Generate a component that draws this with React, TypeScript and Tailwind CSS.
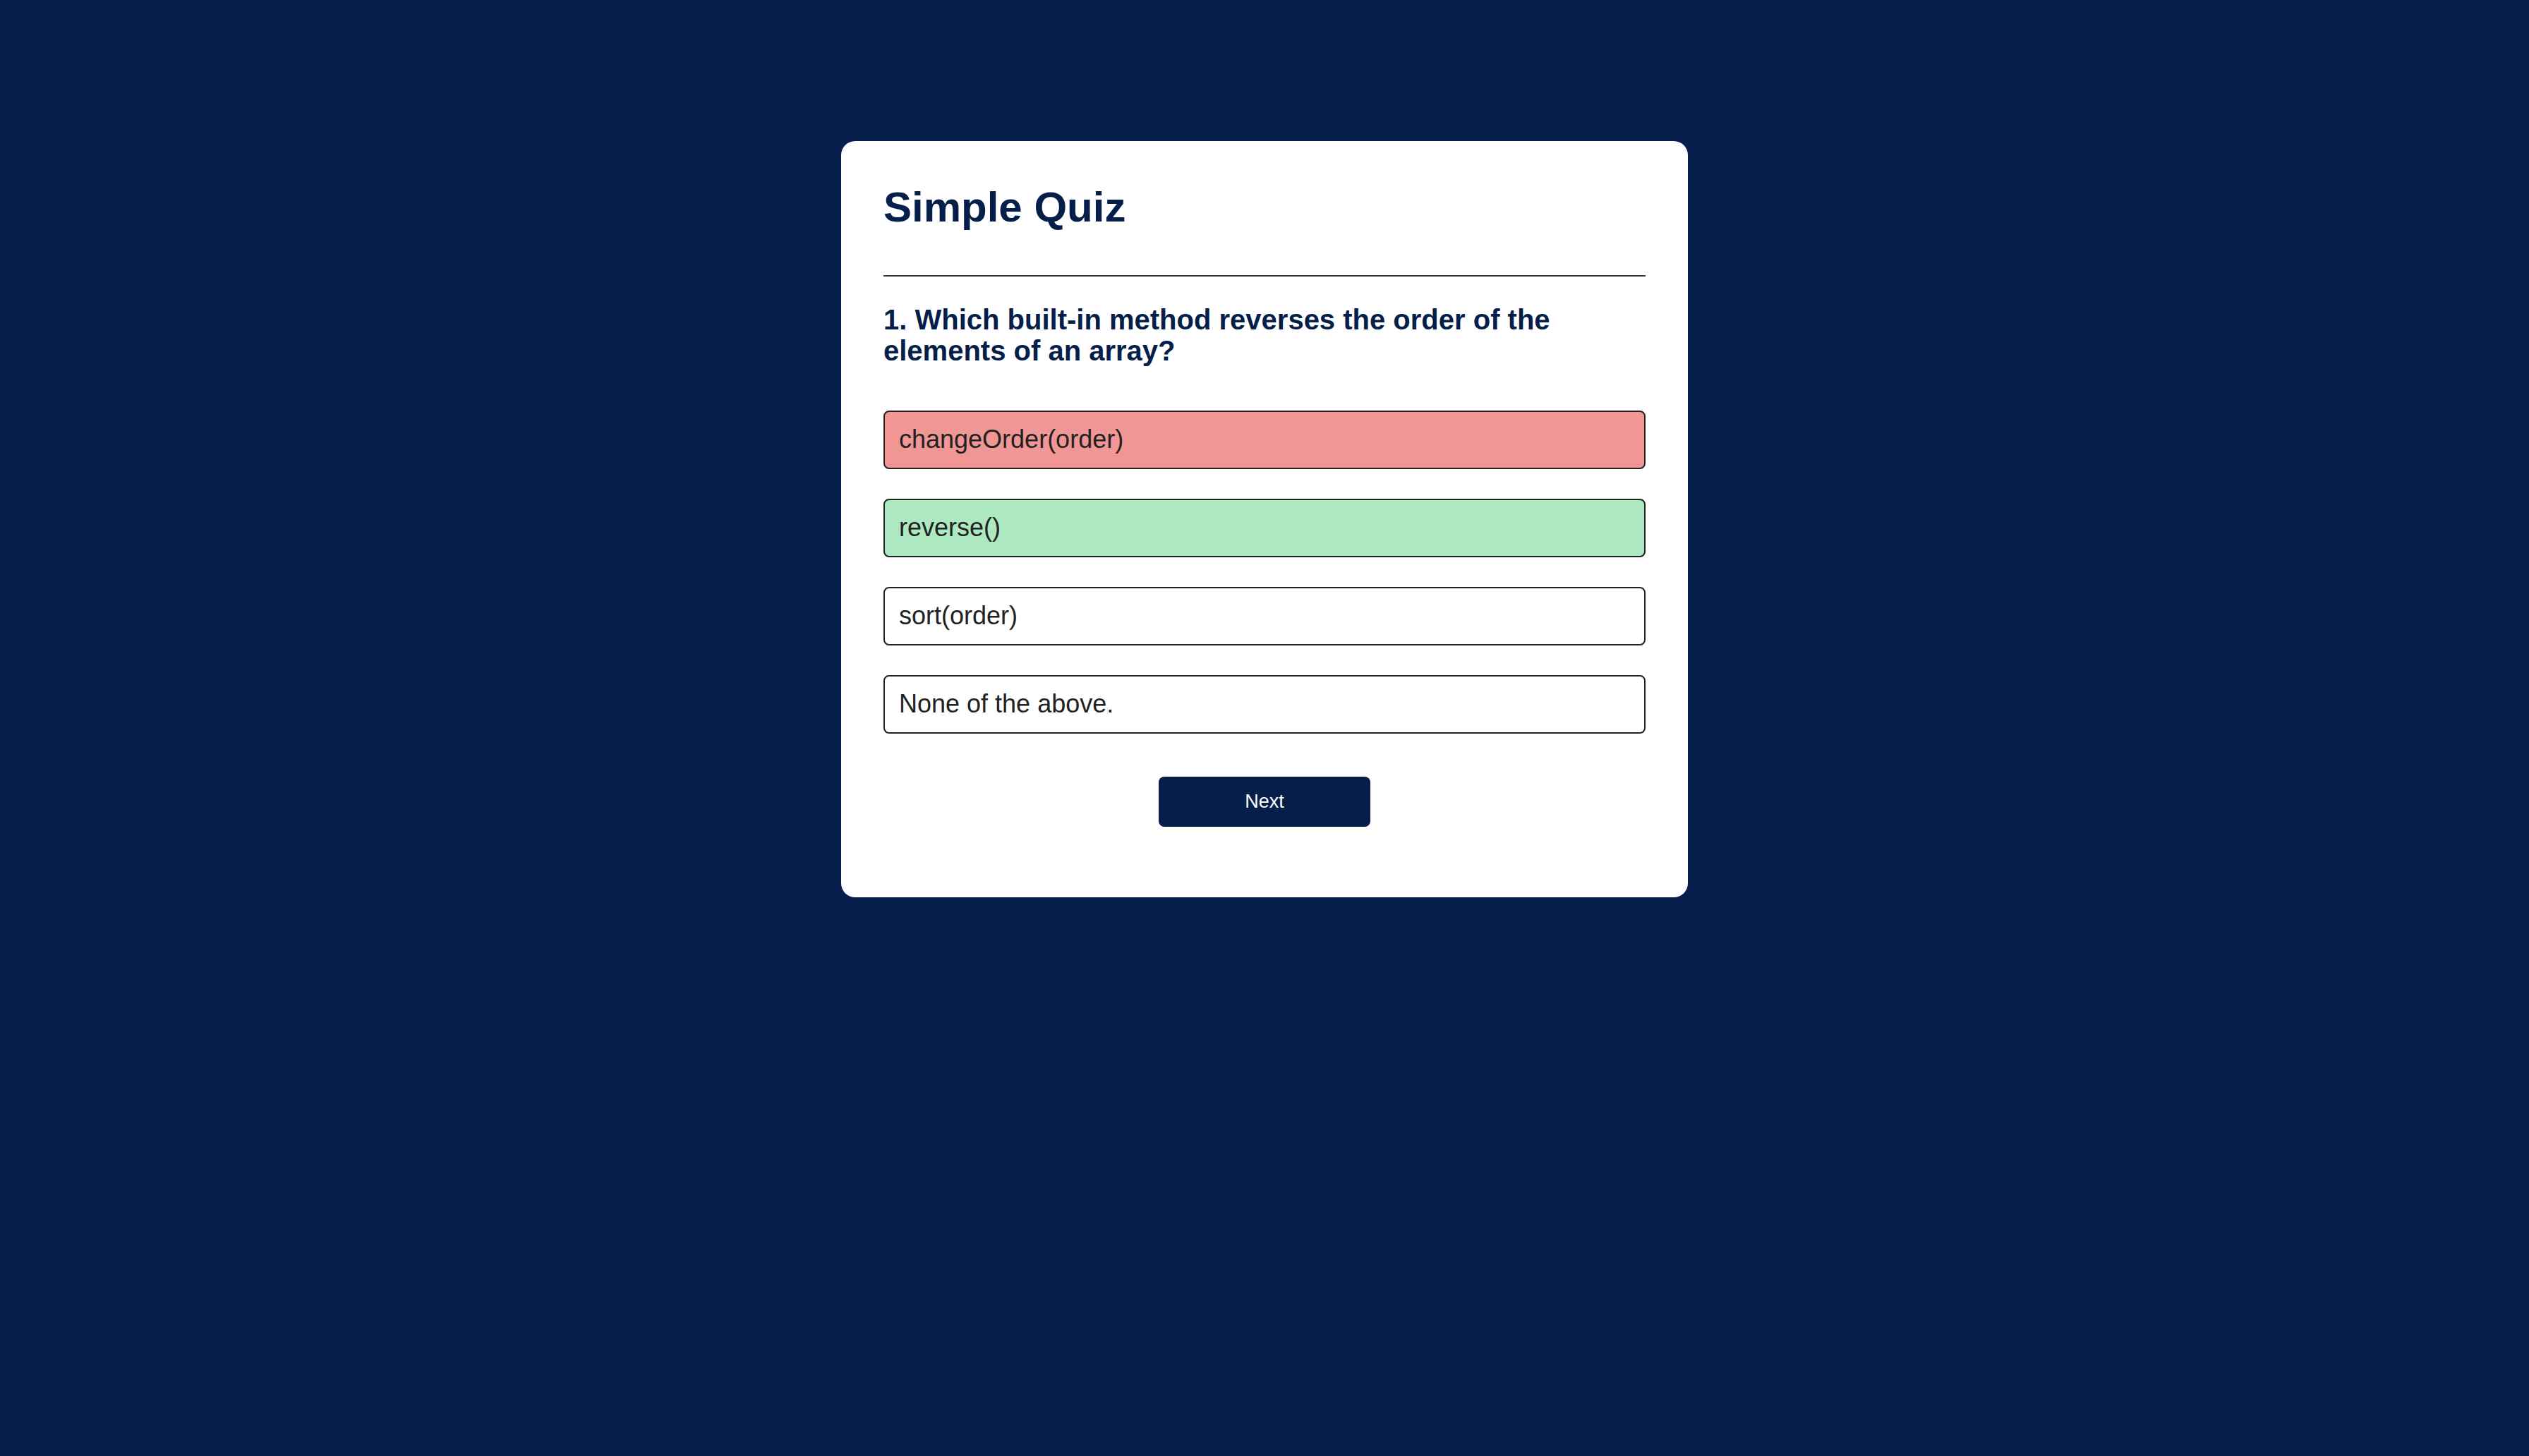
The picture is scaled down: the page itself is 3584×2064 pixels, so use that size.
import React from "react";

const options = [
  { text: "changeOrder(order)", cls: "bg-[#f09694]" },
  { text: "reverse()", cls: "bg-[#ace9c1]" },
  { text: "sort(order)", cls: "bg-white" },
  { text: "None of the above.", cls: "bg-white" },
];

export default function App() {
  return (
    <div
      className="min-h-screen w-full bg-[#061f4a] pt-[200px]"
      style={{ fontFamily: '"Liberation Sans", Arial, Helvetica, sans-serif' }}
    >
      <div className="mx-auto w-[1200px] rounded-[20px] bg-white p-[60px]">
        <h1 className="border-b-2 border-[#333] pt-[4px] pb-[66px] text-[60px] font-bold leading-[60px] text-[#061f4a]">
          Simple Quiz
        </h1>
        <div className="pt-[39px] pb-[40px]">
          <h2 className="text-[40px] font-bold leading-[44px] text-[#061f4a]">
            1. Which built-in method reverses the order of the elements of an array?
          </h2>
          <div className="mt-[63px] flex flex-col gap-[42px]">
            {options.map((o) => (
              <button
                key={o.text}
                className={`w-full rounded-[8px] border-2 border-[#222] pl-[20px] pr-[18px] pt-[18px] pb-[20px] text-left text-[36px] leading-[41px] text-[#222] ${o.cls}`}
              >
                {o.text}
              </button>
            ))}
          </div>
          <div className="mt-[61px] flex justify-center">
            <button className="h-[71px] w-[300px] rounded-[8px] bg-[#061f4a] text-[27px] text-white">
              Next
            </button>
          </div>
        </div>
      </div>
    </div>
  );
}
